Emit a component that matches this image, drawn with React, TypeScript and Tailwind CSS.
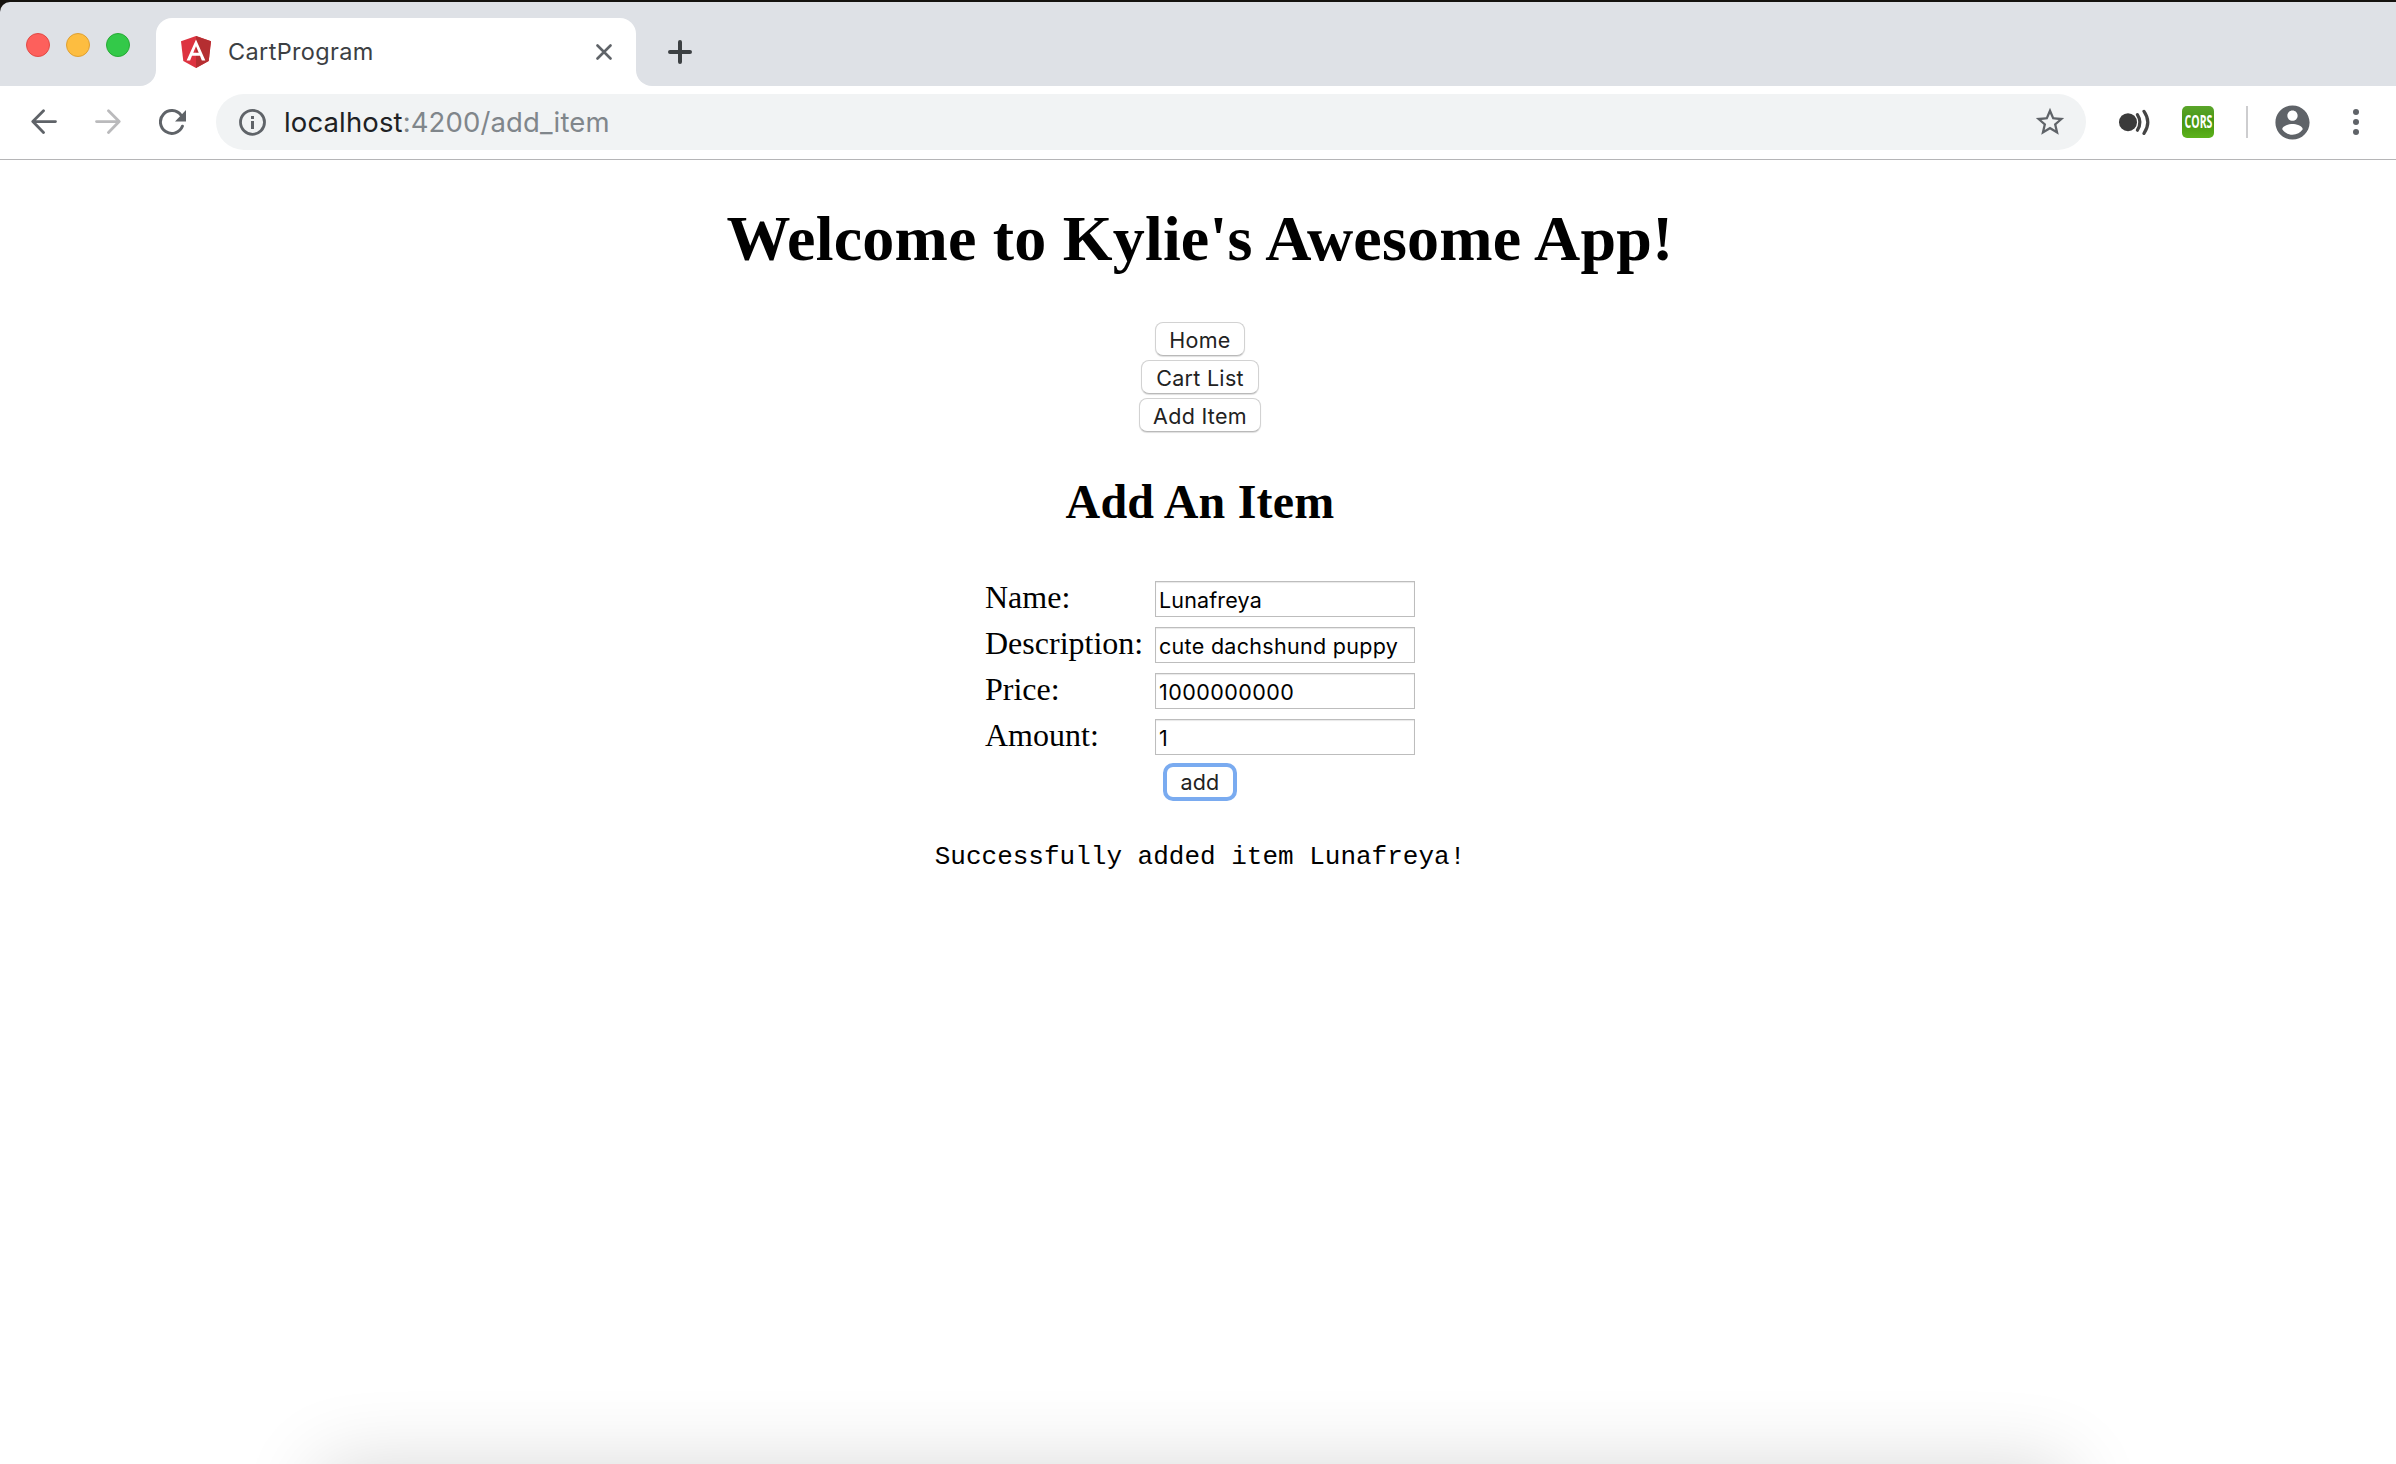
import React from "react";

const ui = "font-['Inter',sans-serif]";

function AngularLogo() {
  return (
    <svg viewBox="31.9 30 186.2 200" preserveAspectRatio="none" className="h-8 w-[30px]">
      <path fill="#dd3340" d="M125 30 31.9 63.2l14.2 123.1L125 230l78.9-43.7 14.2-123.1z" />
      <path fill="#b52e31" d="M125 30v200l78.9-43.7 14.2-123.1z" />
      <path
        fill="#fff"
        d="M125 52.1 66.8 182.6h21.7l11.7-29.2h49.4l11.7 29.2H183L125 52.1zm17 83.3h-34l17-40.9z"
      />
    </svg>
  );
}

function TabStrip() {
  return (
    <div className="flex h-[84px] rounded-tl-[10px] bg-[#dee1e6]">
      <div className="flex w-[156px] gap-4 pt-[31px] pl-[26px]">
        <span className="size-6 rounded-full border border-[#e24a45] bg-[#fd605c]" />
        <span className="size-6 rounded-full border border-[#dfa032] bg-[#fdbd40]" />
        <span className="size-6 rounded-full border border-[#27aa35] bg-[#33c949]" />
      </div>
      <div className="relative mt-4 flex h-[68px] w-[480px] items-center rounded-t-2xl bg-white pl-[25px]">
        <span className="absolute bottom-0 -left-4 size-4 bg-white">
          <span className="block size-4 rounded-br-2xl bg-[#dee1e6]" />
        </span>
        <span className="absolute -right-4 bottom-0 size-4 bg-white">
          <span className="block size-4 rounded-bl-2xl bg-[#dee1e6]" />
        </span>
        <AngularLogo />
        <span className={`${ui} ml-[17px] text-[23.5px] leading-8 tracking-[.35px] text-[#3c4043]`}>CartProgram</span>
        <svg viewBox="0 0 16 16" className="mr-6 ml-auto size-4" stroke="#5f6368" strokeWidth="2.6" strokeLinecap="round">
          <path d="M1.5 1.5l13 13M14.5 1.5l-13 13" />
        </svg>
      </div>
      <svg viewBox="0 0 24 24" className="mt-[38px] ml-8 size-6" stroke="#3c4043" strokeWidth="4" strokeLinecap="round">
        <path d="M12 2v20M2 12h20" />
      </svg>
    </div>
  );
}

function Toolbar() {
  return (
    <div className="flex h-[74px] items-center border-b border-[#b5b5b7] bg-white pb-px">
      <svg viewBox="0 0 26 26" className="ml-[31px] size-[26px]" fill="none" stroke="#5f6368" strokeWidth="2.8" strokeLinecap="round" strokeLinejoin="round">
        <path d="M24.5 12.6H2M12.5 1.8 1.8 12.6l10.7 10.8" />
      </svg>
      <svg viewBox="0 0 26 26" className="ml-[38px] size-[26px]" fill="none" stroke="#bababc" strokeWidth="2.8" strokeLinecap="round" strokeLinejoin="round">
        <path d="M1.5 12.6H24M13.5 1.8l10.7 10.8-10.7 10.8" />
      </svg>
      <svg viewBox="0 0 27 27" className="ml-[38px] size-[27px]" fill="none">
        <path d="M23.4 17.2A11.4 11.4 0 1 1 22 6.2" stroke="#5f6368" strokeWidth="3" strokeLinecap="round" />
        <path d="M27 1v11.5H16z" fill="#5f6368" />
      </svg>
      <div className="ml-[30px] flex h-14 w-[1870px] items-center rounded-full bg-[#f1f3f4]">
        <svg viewBox="0 0 28 28" className="ml-[22px] size-7">
          <circle cx="14.5" cy="14.3" r="12" fill="none" stroke="#5f6368" strokeWidth="2.8" />
          <path d="M13 8h3v3h-3zM13 13h3v8h-3z" fill="#5f6368" />
        </svg>
        <span className={`${ui} mb-px ml-[18px] text-[27.5px] leading-9 tracking-[.13px] text-[#202124]`}>
          localhost<span className="text-[#80868b]">:4200/add_item</span>
        </span>
        <svg viewBox="0 0 24 24" className="mr-[19px] ml-auto size-[34px]" fill="#5f6368">
          <path d="M22 9.24l-7.19-.62L12 2 9.19 8.63 2 9.24l5.46 4.73L5.82 21 12 17.27 18.18 21l-1.63-7.03L22 9.24zM12 15.4l-3.76 2.27 1-4.28-3.32-2.88 4.38-.38L12 6.1l1.71 4.04 4.38.38-3.32 2.88 1 4.28L12 15.4z" />
        </svg>
      </div>
      <svg viewBox="0 0 32 26" className="ml-8 h-[26px] w-8" fill="none" stroke="#444" strokeWidth="3.2" strokeLinecap="round">
        <circle cx="10" cy="13.2" r="9" fill="#3b3b3b" stroke="none" />
        <path d="M19.4 5.6q5 7.6 0 15.6" />
        <path d="M26 2.4q7.6 10.8 0 22" />
      </svg>
      <div className="ml-8 flex size-8 items-center justify-center rounded-[5px] bg-linear-to-b from-[#5aa52a] via-[#479610] to-[#5cb21c]">
        <span className="scale-x-[.62] font-['Open_Sans',sans-serif] text-[17px] font-bold text-white">CORS</span>
      </div>
      <span className="ml-8 h-8 w-0.5 bg-[#cdcdcf]" />
      <svg viewBox="0 0 24 24" className="ml-[24px] size-[41px]" fill="#5f6368">
        <path d="M12 2C6.48 2 2 6.48 2 12s4.48 10 10 10 10-4.48 10-10S17.52 2 12 2zm0 3c1.66 0 3 1.34 3 3s-1.34 3-3 3-3-1.34-3-3 1.34-3 3-3zm0 14.2c-2.5 0-4.71-1.28-6-3.22.03-1.99 4-3.08 6-3.08 1.99 0 5.97 1.09 6 3.08-1.29 1.94-3.5 3.22-6 3.22z" />
      </svg>
      <div className="ml-[40px] flex flex-col gap-1">
        <span className="size-1.5 rounded-full bg-[#5f6368]" />
        <span className="size-1.5 rounded-full bg-[#5f6368]" />
        <span className="size-1.5 rounded-full bg-[#5f6368]" />
      </div>
    </div>
  );
}

function NavButton({ label, width }: { label: string; width: string }) {
  return (
    <button
      className={`${ui} ${width} flex h-[34px] items-center justify-center rounded-lg border border-[#d2d2d2] border-b-[#b9b9b9] bg-white pt-0.5 text-[21.5px] tracking-[.3px] text-[#222] shadow-[0_1px_1px_rgba(0,0,0,.13)]`}
    >
      {label}
    </button>
  );
}

function Field({ label, value, tracking = "tracking-[.3px]" }: { label: string; value: string; tracking?: string }) {
  return (
    <div className="flex h-9">
      <label className="w-[170px] text-[32px] leading-8">{label}</label>
      <input
        defaultValue={value}
        className={`${ui} ${tracking} h-9 w-[260px] border border-[#bdbdbd] bg-white pt-0.5 pl-[3px] text-[21.5px] text-black shadow-[inset_0_1px_1px_#e8e8e8] outline-none`}
      />
    </div>
  );
}

export default function App() {
  return (
    <div className="relative h-[1464px] w-[2396px] overflow-hidden bg-white">
      <div className="bg-[#14120e] pt-0.5">
        <TabStrip />
      </div>
      <Toolbar />
      <main className="flex flex-col items-center pl-1 font-['Liberation_Serif',serif] text-black">
        <h1 className="mt-[42px] text-[64px] leading-[74px] font-bold tracking-[.2px] whitespace-nowrap">
          Welcome to Kylie's Awesome App!
        </h1>
        <nav className="mt-[46px] flex flex-col items-center gap-1">
          <NavButton label="Home" width="w-[90px]" />
          <NavButton label="Cart List" width="w-[118px]" />
          <NavButton label="Add Item" width="w-[122px]" />
        </nav>
        <h2 className="mt-[42px] text-[48px] leading-[56px] font-bold tracking-[.2px]">Add An Item</h2>
        <form className="mt-[51px] flex w-[430px] flex-col gap-2.5">
          <Field label="Name:" value="Lunafreya" tracking="tracking-[.15px]" />
          <Field label="Description:" value="cute dachshund puppy" />
          <Field label="Price:" value="1000000000" tracking="tracking-[.45px]" />
          <Field label="Amount:" value="1" />
        </form>
        <button
          className={`${ui} mt-2 flex h-[38px] w-[74px] items-center justify-center rounded-[10px] border-4 border-[#7aabf0] bg-white text-[21.5px] tracking-[.2px] text-[#222]`}
        >
          add
        </button>
        <pre className="mt-[41px] font-['Liberation_Mono',monospace] text-[26px] leading-[30px]">
          Successfully added item Lunafreya!
        </pre>
      </main>
      <div className="pointer-events-none absolute top-[1466px] left-[320px] h-40 w-[1746px] shadow-[0_0_80px_rgba(0,0,0,.16)]" />
    </div>
  );
}
